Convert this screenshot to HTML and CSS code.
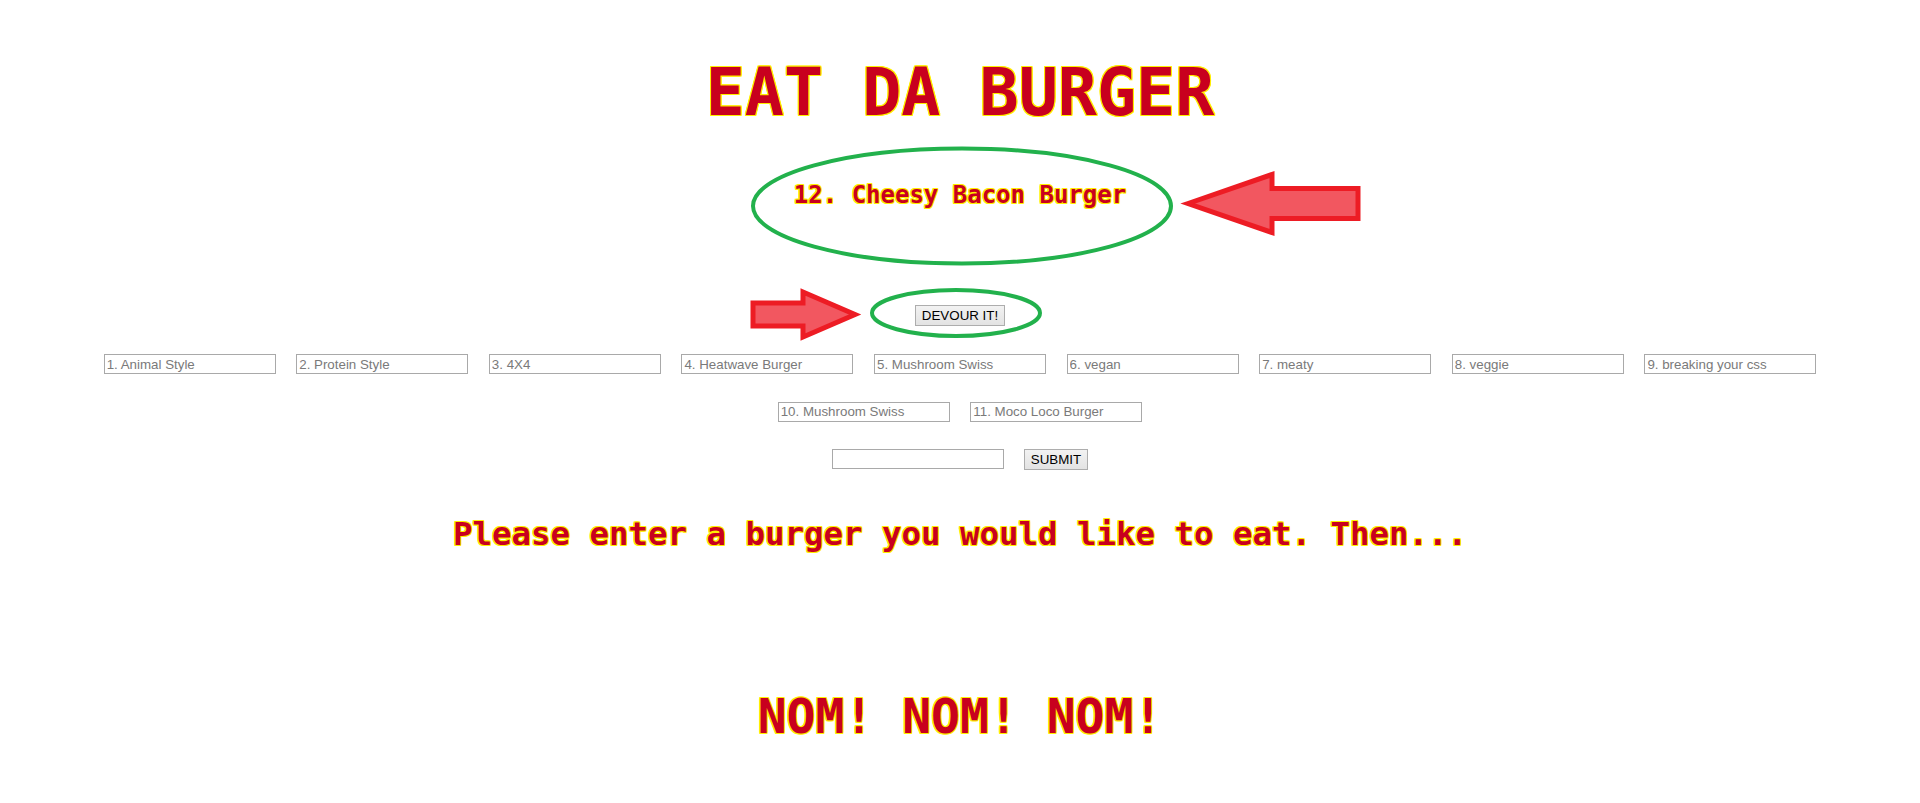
FILE: index.html
```html
<!DOCTYPE html>
<html lang="en">
<head>
<meta charset="utf-8">
<title>Eat Da Burger</title>
<link rel="stylesheet" href="styles.css">
</head>
<body>
<main class="page">
  <h1 class="title">EAT DA BURGER</h1>
  <section class="devour">
    <h2 class="burger-name">12. Cheesy Bacon Burger</h2>
    <button class="btn devour-btn" type="button">DEVOUR IT!</button>
  </section>
  <section class="burgers">
    <input class="burger-input" type="text" placeholder="1. Animal Style">
    <input class="burger-input" type="text" placeholder="2. Protein Style">
    <input class="burger-input" type="text" placeholder="3. 4X4">
    <input class="burger-input" type="text" placeholder="4. Heatwave Burger">
    <input class="burger-input" type="text" placeholder="5. Mushroom Swiss">
    <input class="burger-input" type="text" placeholder="6. vegan">
    <input class="burger-input" type="text" placeholder="7. meaty">
    <input class="burger-input" type="text" placeholder="8. veggie">
    <input class="burger-input" type="text" placeholder="9. breaking your css">
    <input class="burger-input" type="text" placeholder="10. Mushroom Swiss">
    <input class="burger-input" type="text" placeholder="11. Moco Loco Burger">
  </section>
  <form class="add-form">
    <input class="burger-input" type="text">
    <button class="btn submit-btn" type="button">SUBMIT</button>
  </form>
  <h1 class="prompt">Please enter a burger you would like to eat. Then...</h1>
  <h1 class="nom">NOM! NOM! NOM!</h1>
</main>
<svg class="annotations" width="1920" height="803" viewBox="0 0 1920 803" xmlns="http://www.w3.org/2000/svg">
  <ellipse cx="962" cy="206" rx="209" ry="57.5" fill="none" stroke="#22b14c" stroke-width="4"/>
  <ellipse cx="956" cy="313" rx="84" ry="23" fill="none" stroke="#22b14c" stroke-width="4"/>
  <polygon points="1188,203.5 1272,174.5 1272,188.5 1358,188.5 1358,218.5 1272,218.5 1272,232.5" fill="#f25760" stroke="#ed1c24" stroke-width="5" stroke-linejoin="miter"/>
  <polygon points="753,303 803,303 803,292 855,314.5 803,337 803,326 753,326" fill="#f25760" stroke="#ed1c24" stroke-width="5" stroke-linejoin="miter"/>
</svg>
</body>
</html>
```
FILE: styles.css
```css
html, body {
  margin: 0;
  padding: 0;
  background: #ffffff;
}

body {
  position: relative;
  width: 1920px;
  height: 803px;
  overflow: hidden;
  font-family: "Liberation Sans", Arial, sans-serif;
}

.page {
  display: flex;
  flex-direction: column;
  align-items: center;
  padding-top: 60px;
}

.title,
.burger-name,
.prompt,
.nom {
  margin: 0;
  font-family: "DejaVu Sans Mono", "Liberation Mono", monospace;
  font-weight: bold;
  color: #c8001e;
  text-align: center;
  white-space: nowrap;
  text-shadow:
    1px 0 0 #ffee00,
    -1px 0 0 #ffee00,
    0 1px 0 #ffee00,
    0 -1px 0 #ffee00,
    1px 1px 0 #ffee00,
    -1px -1px 0 #ffee00,
    1px -1px 0 #ffee00,
    -1px 1px 0 #ffee00;
}

.title {
  font-size: 65px;
  line-height: 66px;
}

.devour {
  display: flex;
  flex-direction: column;
  align-items: center;
  margin-top: 57px;
}

.burger-name {
  font-size: 24px;
  line-height: 24px;
}

.btn {
  box-sizing: border-box;
  height: 21px;
  padding: 0 6px;
  border: 1px solid #adadad;
  border-radius: 0;
  background: linear-gradient(#f2f2f2, #e3e3e3);
  font-family: "Liberation Sans", Arial, sans-serif;
  font-size: 13.33px;
  line-height: 19px;
  color: #000000;
}

.devour-btn {
  margin-top: 98px;
}

.burgers {
  display: flex;
  flex-wrap: wrap;
  justify-content: center;
  gap: 27.5px 20.6px;
  width: 1714px;
  margin-top: 28px;
}

.burger-input {
  box-sizing: border-box;
  width: 172px;
  height: 20px;
  margin: 0;
  padding: 1px 2px;
  border: 1px solid #a9a9a9;
  border-radius: 0;
  background: #ffffff;
  font-family: "Liberation Sans", Arial, sans-serif;
  font-size: 13.33px;
  color: #000000;
  outline: none;
}

.burger-input::placeholder {
  color: #7a7a7a;
  opacity: 1;
}

.add-form {
  display: flex;
  align-items: flex-start;
  gap: 20px;
  margin: 27.5px 0 0;
}

.prompt {
  font-size: 32.4px;
  line-height: 40px;
  margin-top: 43.5px;
}

.nom {
  font-size: 48px;
  line-height: 48px;
  margin-top: 138.5px;
}

.annotations {
  position: absolute;
  left: 0;
  top: 0;
  pointer-events: none;
}
```
